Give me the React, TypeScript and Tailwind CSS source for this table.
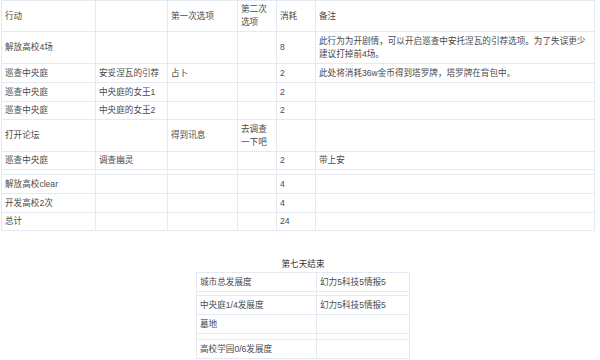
import React from 'react'

const cell = 'border border-[#e4eaf3] px-[3px] py-0 align-middle'
const thin = 'border border-[#e4eaf3] p-0 text-[0px] leading-[0px]'

type Row = { h: string; thin?: boolean; cells: string[] }

const rows: Row[] = [
  { h: 'h-[31px]', cells: ['行动', '', '第一次选项', '第二次选项', '消耗', '备注'] },
  { h: 'h-[32px]', cells: ['解放高校4场', '', '', '', '8', '此行为为开剧情，可以开启巡查中安托涅瓦的引荐选项。为了失误更少建议打掉前4场。'] },
  { h: 'h-[19px]', cells: ['巡查中央庭', '安妥涅瓦的引荐', '占卜', '', '2', '此处将消耗36w金币得到塔罗牌，塔罗牌在背包中。'] },
  { h: 'h-[19px]', cells: ['巡查中央庭', '中央庭的女王1', '', '', '2', ''] },
  { h: 'h-[18px]', cells: ['巡查中央庭', '中央庭的女王2', '', '', '2', ''] },
  { h: 'h-[32px]', cells: ['打开论坛', '', '得到讯息', '去调查一下吧', '', ''] },
  { h: 'h-[18px]', cells: ['巡查中央庭', '调查幽灵', '', '', '2', '带上安'] },
  { h: 'h-[5px]', thin: true, cells: ['', '', '', '', '', ''] },
  { h: 'h-[19px]', cells: ['解放高校clear', '', '', '', '4', ''] },
  { h: 'h-[19px]', cells: ['开发高校2次', '', '', '', '4', ''] },
  { h: 'h-[18px]', cells: ['总计', '', '', '', '24', ''] },
]

const cols = ['w-[94px]', 'w-[72px]', 'w-[70px]', 'w-[39px]', 'w-[39px]', 'w-[279px]']

const endRows: Row[] = [
  { h: 'h-[19px]', cells: ['城市总发展度', '幻力5科技5情报5'] },
  { h: 'h-[4px]', thin: true, cells: ['', ''] },
  { h: 'h-[19px]', cells: ['中央庭1/4发展度', '幻力5科技5情报5'] },
  { h: 'h-[19px]', cells: ['墓地', ''] },
  { h: 'h-[6px]', thin: true, cells: ['', ''] },
  { h: 'h-[19px]', cells: ['高校学园0/6发展度', ''] },
]

const Table = ({ data, colClasses, className }: { data: Row[]; colClasses: string[]; className: string }) => (
  <table className={`border-collapse table-fixed ${className}`}>
    <colgroup>
      {colClasses.map((c, i) => (
        <col key={i} className={c} />
      ))}
    </colgroup>
    <tbody>
      {data.map((r, i) => (
        <tr key={i} className={r.h}>
          {r.cells.map((c, j) => (
            <td key={j} className={r.thin ? thin : cell}>
              {c}
            </td>
          ))}
        </tr>
      ))}
    </tbody>
  </table>
)

export default function App() {
  return (
    <div className="w-[600px] h-[360px] bg-white text-[#4a4a4a] text-[8.6px] leading-[13px] overflow-hidden font-['Liberation_Sans','Noto_Sans_CJK_SC',sans-serif]">
      {/* 行动表 */}
      <div className="pl-[1px]">
        <Table data={rows} colClasses={cols} className="w-[594px]" />
      </div>

      {/* 第七天结束 */}
      <div className="mt-[27px] flex flex-col items-center">
        <div className="text-[#333] h-[12px] leading-[12px] mb-[2px] pl-[6px]">第七天结束</div>
        <Table data={endRows} colClasses={['w-[120px]', 'w-[93px]']} className="w-[213px] ml-[6px]" />
      </div>
    </div>
  )
}
